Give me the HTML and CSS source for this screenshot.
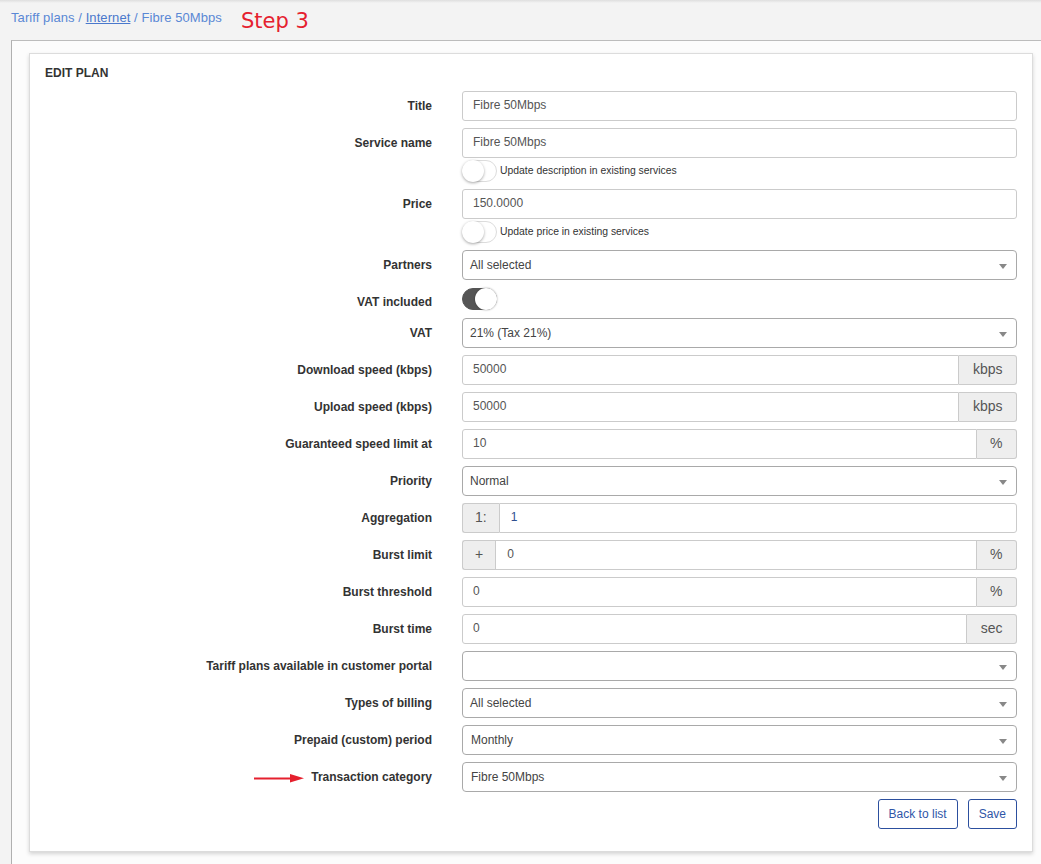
FILE: index.html
```html
<!DOCTYPE html>
<html>
<head>
<meta charset="utf-8">
<link rel="stylesheet" href="styles.css">
</head>
<body>
<div class="topbar"></div>
<div class="crumbs">
  <span class="bc">Tariff plans / <a class="bc-link">Internet</a> / Fibre 50Mbps</span>
  <span class="step">Step 3</span>
</div>
<div class="panel">
  <div class="card">
    <h2 class="card-title">EDIT PLAN</h2>
    <div class="form">
      <div class="row"><div class="lbl">Title</div><div class="field"><div class="input">Fibre 50Mbps</div></div></div>
      <div class="row"><div class="lbl">Service name</div><div class="field"><div class="input">Fibre 50Mbps</div>
        <div class="tgl-line"><span class="tgl"><span class="knob"></span></span><span class="tgl-text">Update description in existing services</span></div></div></div>
      <div class="row"><div class="lbl">Price</div><div class="field"><div class="input">150.0000</div>
        <div class="tgl-line"><span class="tgl"><span class="knob"></span></span><span class="tgl-text">Update price in existing services</span></div></div></div>
      <div class="row"><div class="lbl">Partners</div><div class="field"><div class="select"><span class="sel-val">All selected</span><span class="caret"></span></div></div></div>
      <div class="row row-toggle"><div class="lbl lbl-short">VAT included</div><div class="field"><span class="tgl tgl-on"><span class="knob"></span></span></div></div>
      <div class="row"><div class="lbl">VAT</div><div class="field"><div class="select"><span class="sel-val">21% (Tax 21%)</span><span class="caret"></span></div></div></div>
      <div class="row"><div class="lbl">Download speed (kbps)</div><div class="field"><div class="group"><div class="input in-group">50000</div><span class="addon addon-r">kbps</span></div></div></div>
      <div class="row"><div class="lbl">Upload speed (kbps)</div><div class="field"><div class="group"><div class="input in-group">50000</div><span class="addon addon-r">kbps</span></div></div></div>
      <div class="row"><div class="lbl">Guaranteed speed limit at</div><div class="field"><div class="group"><div class="input in-group">10</div><span class="addon addon-r">%</span></div></div></div>
      <div class="row"><div class="lbl">Priority</div><div class="field"><div class="select"><span class="sel-val">Normal</span><span class="caret"></span></div></div></div>
      <div class="row"><div class="lbl">Aggregation</div><div class="field"><div class="group"><span class="addon addon-l">1:</span><div class="input in-group-l val-blue">1</div></div></div></div>
      <div class="row"><div class="lbl">Burst limit</div><div class="field"><div class="group"><span class="addon addon-l">+</span><div class="input in-group-m">0</div><span class="addon addon-r">%</span></div></div></div>
      <div class="row"><div class="lbl">Burst threshold</div><div class="field"><div class="group"><div class="input in-group">0</div><span class="addon addon-r">%</span></div></div></div>
      <div class="row"><div class="lbl">Burst time</div><div class="field"><div class="group"><div class="input in-group">0</div><span class="addon addon-r">sec</span></div></div></div>
      <div class="row"><div class="lbl">Tariff plans available in customer portal</div><div class="field"><div class="select"><span class="sel-val"></span><span class="caret"></span></div></div></div>
      <div class="row"><div class="lbl">Types of billing</div><div class="field"><div class="select"><span class="sel-val">All selected</span><span class="caret"></span></div></div></div>
      <div class="row"><div class="lbl">Prepaid (custom) period</div><div class="field"><div class="select"><span class="sel-val sel-pad">Monthly</span><span class="caret"></span></div></div></div>
      <div class="row"><div class="lbl"><svg class="arrow" width="52" height="10" viewBox="0 0 52 10"><path d="M1 5.5 H40" stroke="#e5202e" stroke-width="2.2"/><path d="M37 1 L51 5.3 L37 9.5 Z" fill="#e5202e"/></svg>Transaction category</div><div class="field"><div class="select"><span class="sel-val sel-pad">Fibre 50Mbps</span><span class="caret"></span></div></div></div>
      <div class="actions"><button class="btn">Back to list</button><button class="btn">Save</button></div>
    </div>
  </div>
</div>
</body>
</html>
```
FILE: styles.css
```css
html, body {
  margin: 0;
  padding: 0;
}
body {
  background: #f3f3f3;
  font-family: "Liberation Sans", Arial, sans-serif;
  overflow: hidden;
  height: 864px;
}
.topbar {
  height: 3px;
  background: linear-gradient(#dedede, #f3f3f3);
}
.crumbs {
  height: 37px;
  display: flex;
  align-items: flex-start;
  padding-left: 11px;
  box-sizing: border-box;
}
.bc {
  font-size: 13px;
  line-height: 16px;
  margin-top: 7px;
  color: #5a88d5;
  letter-spacing: 0.08px;
}
.bc-link {
  color: #4a78cc;
  text-decoration: underline;
}
.step {
  font-family: "DejaVu Sans", sans-serif;
  font-size: 21px;
  line-height: 24px;
  margin-top: 6px;
  margin-left: 19px;
  color: #e5202e;
}
.panel {
  margin-left: 11px;
  width: 1100px;
  border-top: 1px solid #bcbcbc;
  border-left: 1px solid #b0b0b0;
  background: #fcfcfc;
  padding: 12px 0 20px 17px;
}
.card {
  width: 972px;
  background: #fff;
  border: 1px solid #dcdcdc;
  box-shadow: 0 2px 4px rgba(0,0,0,0.16);
  padding: 11px 15px 22px;
}
.card-title {
  margin: 0 0 10px;
  font-size: 12px;
  line-height: 16px;
  font-weight: bold;
  color: #333;
}
.row {
  display: grid;
  grid-template-columns: 387px 555px;
  column-gap: 30px;
  margin-bottom: 7px;
}
.lbl {
  text-align: right;
  font-size: 12px;
  font-weight: bold;
  color: #333;
  height: 30px;
  line-height: 30px;
  display: flex;
  justify-content: flex-end;
  align-items: center;
}
.row-toggle .lbl {
  height: 24px;
  padding-top: 6px;
  box-sizing: border-box;
  line-height: 16px;
}
.arrow {
  margin-right: 6px;
  margin-top: 1px;
}
.field {
  display: flex;
  flex-direction: column;
}
.input {
  height: 30px;
  box-sizing: border-box;
  border: 1px solid #cbcbcb;
  border-radius: 3px;
  background: #fff;
  font-size: 12px;
  line-height: 27px;
  color: #555;
  padding: 0 10px;
}
.select {
  height: 30px;
  box-sizing: border-box;
  border: 1px solid #a9a9a9;
  border-radius: 4px;
  background: #fff;
  display: flex;
  align-items: center;
  padding: 0 9px 0 7px;
}
.sel-val {
  flex: 1;
  font-size: 12px;
  color: #444;
  line-height: 27px;
}
.sel-pad {
  padding-left: 1px;
}
.caret {
  width: 0;
  height: 0;
  border-left: 4px solid transparent;
  border-right: 4px solid transparent;
  border-top: 5px solid #888;
  margin-top: 2px;
}
.group {
  display: flex;
  height: 30px;
}
.in-group {
  flex: 1;
  border-radius: 3px 0 0 3px;
}
.in-group-l {
  flex: 1;
  border-radius: 0 3px 3px 0;
  padding-left: 11px;
}
.in-group-m {
  flex: 1;
  border-radius: 0;
  padding-left: 11px;
}
.val-blue {
  color: #2f4f8f;
}
.addon {
  box-sizing: border-box;
  height: 30px;
  background: #eee;
  border: 1px solid #cbcbcb;
  font-size: 14px;
  line-height: 27px;
  color: #555;
  padding: 0 13.5px;
}
.addon-r {
  border-left: none;
  border-radius: 0 3px 3px 0;
}
.addon-l {
  border-right: none;
  border-radius: 3px 0 0 3px;
  padding: 0 12px;
  text-align: center;
}
.tgl-line {
  display: flex;
  align-items: center;
  margin-top: 2px;
  height: 22px;
}
.tgl {
  position: relative;
  display: inline-block;
  width: 35px;
  height: 22px;
  box-sizing: border-box;
  border: 1px solid #dcdcdc;
  border-radius: 11px;
  background: #fff;
}
.knob {
  position: absolute;
  left: -1px;
  top: -1px;
  width: 22px;
  height: 22px;
  border-radius: 50%;
  background: #fff;
  box-shadow: 0 1px 3px rgba(0,0,0,0.35);
}
.tgl-on {
  background: #555;
  border-color: #555;
  margin-top: 1px;
}
.tgl-on .knob {
  left: auto;
  right: -1px;
  box-shadow: 0 0 2px rgba(0,0,0,0.4);
}
.tgl-text {
  font-size: 10.4px;
  line-height: 14px;
  color: #333;
  margin-left: 3px;
  margin-top: 0;
}
.actions {
  display: flex;
  justify-content: flex-end;
  gap: 10px;
}
.btn {
  height: 30px;
  padding: 0 10px;
  background: #fff;
  border: 1px solid #2c4f9e;
  border-radius: 3px;
  color: #2f56a8;
  font-family: "Liberation Sans", Arial, sans-serif;
  font-size: 12px;
}
```
